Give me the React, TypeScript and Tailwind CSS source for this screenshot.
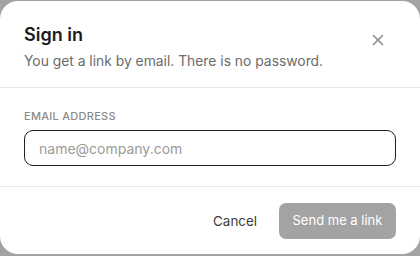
import React from "react";

const SignInDialog: React.FC = () => {
  return (
    <div className="w-[420px] h-[256px] bg-[#a3a3a3] pt-px font-['Inter',sans-serif] overflow-hidden">
      <div className="w-[420px] h-[253px] bg-white rounded-[18px] flex flex-col">
        <div className="relative px-6 pt-[20px] pb-4 border-b border-[#e7e7e7]">
          <h2 className="text-[18px] leading-[28px] font-semibold text-[#1a1a1a]">Sign in</h2>
          <p className="mt-[2px] text-[13.85px] leading-[20px] text-[#6b6b6b]">
            You get a link by email. There is no password.
          </p>
          <button className="absolute right-[36px] top-[33px] text-[#8a8a8a]">
            <svg width="12" height="12" viewBox="0 0 12 12" fill="none" stroke="currentColor" strokeWidth="1.5" strokeLinecap="round">
              <path d="M1.5 1.5L10.5 10.5M10.5 1.5L1.5 10.5" />
            </svg>
          </button>
        </div>
        <div className="px-6 pt-[20px] pb-5 border-b border-[#e7e7e7]">
          <label className="block text-[11px] leading-[16px] font-medium tracking-[0.025em] uppercase text-[#8a8a8a]">
            Email address
          </label>
          <input
            type="email"
            placeholder="name@company.com"
            className="mt-[6px] w-full h-9 rounded-[9px] border border-[#1f1f1f] px-[14px] text-[14px] text-[#1a1a1a] placeholder:text-[#9a9a9a] outline-none"
          />
        </div>
        <div className="flex items-center justify-end gap-[22px] px-6 pt-4">
          <button className="text-[13.4px] text-[#3d3d3d]">Cancel</button>
          <button className="h-9 w-[117px] rounded-[7px] bg-[#a3a3a3] text-white text-[13px]">
            Send me a link
          </button>
        </div>
      </div>
    </div>
  );
};

export default function App() {
  return <SignInDialog />;
}
